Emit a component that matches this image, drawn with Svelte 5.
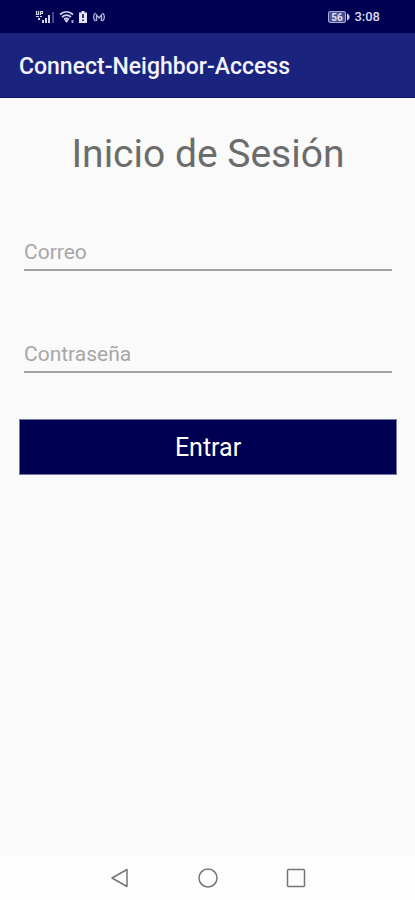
<script>
  let email = $state('');
  let password = $state('');

  function login(event) {
    event.preventDefault();
  }
</script>

<div class="screen">
  <div class="status-bar">
    <div class="status-group">
      <svg width="20" height="14" viewBox="0 0 20 14">
        <path d="M1.500 1v3.500h2V1M5.500 5V1.500h2v2h-2M1 6.500h3M5 6.500h2" stroke="#d4d4ee" stroke-width="1.200" fill="none" />
        <path d="M3 8h2v2H3zM7 10h2v3H7zM10 8h2v5h-2zM13 5h2v8h-2z" fill="#d4d4ee" />
        <path d="M17 2h2v11h-2z" fill="#44448a" />
      </svg>
      <svg width="16" height="14" viewBox="0 0 16 14">
        <path d="M1 4.500c4-3.500 9-3.500 13 0M3 7c3-2.500 6-2.500 9 0M5 9.300c2-1.500 3-1.500 5 0" fill="none" stroke="#d4d4ee" stroke-width="1.700" />
        <path d="M5 9.500h5l-2.500 3.500z" fill="#d4d4ee" />
        <path d="M12.500 10h2v3h-2z" fill="#a5a5d0" />
      </svg>
      <svg width="8" height="14" viewBox="0 0 8 14">
        <path d="M2.500 1h3v1.500H8V13H0V2.500h2.500z" fill="#e4e4f6" />
        <path d="M4 4v4M4 9.500V11" stroke="#000052" stroke-width="1.500" />
      </svg>
      <svg class="cast" width="12" height="14" viewBox="0 0 12 14">
        <path d="M2.500 3C0 5 0 9 2.500 11M9.500 3c2.500 2 2.500 6 0 8M3.500 11V5L6 8l2.500-3v6" fill="none" stroke="#b4b4dc" stroke-width="1.300" />
      </svg>
    </div>
    <div class="status-group">
      <svg width="22" height="12" viewBox="0 0 22 12">
        <rect x="0.500" y="0.500" width="17" height="11" rx="1.500" fill="#4c4c94" stroke="#a9a9d2" />
        <path d="M19.500 3c2 1 2 5 0 6z" fill="#d4d4ee" stroke="#d4d4ee" />
        <text x="9" y="9.500" text-anchor="middle">56</text>
      </svg>
      <span class="time">3:08</span>
    </div>
  </div>

  <header class="app-bar">Connect-Neighbor-Access</header>

  <main>
    <h1>Inicio de Sesión</h1>
    <form onsubmit={login}>
      <input type="email" placeholder="Correo" aria-label="Correo" bind:value={email} />
      <input type="password" placeholder="Contraseña" aria-label="Contraseña" bind:value={password} />
      <button class="submit" type="submit">Entrar</button>
    </form>
  </main>

  <nav>
    <button aria-label="Atrás">
      <svg width="20" height="20" viewBox="0 0 20 20">
        <path d="M17 1.500v17L2 10z" />
      </svg>
    </button>
    <button aria-label="Inicio">
      <svg width="20" height="20" viewBox="0 0 20 20">
        <circle cx="10" cy="10" r="9" />
      </svg>
    </button>
    <button aria-label="Recientes">
      <svg width="20" height="20" viewBox="0 0 20 20">
        <rect x="1.500" y="1.500" width="17" height="17" rx="1" />
      </svg>
    </button>
  </nav>
</div>

<style>
  :global(body) {
    margin: 0;
    background: #fafafa;
  }

  .screen {
    display: flex;
    flex-direction: column;
    min-height: 100vh;
    background: #fafafa;
    font-family: Roboto, "Liberation Sans", sans-serif;
  }

  .status-bar {
    display: flex;
    justify-content: space-between;
    align-items: center;
    box-sizing: border-box;
    height: 33px;
    padding: 0 35px;
    background: #000052;
  }

  .status-group {
    display: flex;
    align-items: center;
    gap: 4px;
  }

  .cast {
    margin-left: 2px;
  }

  .status-group text {
    font-size: 10px;
    font-weight: bold;
    fill: #e4e4f6;
  }

  .time {
    font-size: 13px;
    font-weight: 500;
    color: #dcdcf2;
  }

  .app-bar {
    display: flex;
    align-items: center;
    box-sizing: border-box;
    height: 65px;
    padding: 2px 19px 0;
    border-bottom: 1px solid #10106a;
    background: #1a237e;
    color: #f4f4ff;
    font-size: 23px;
    font-weight: 500;
  }

  main {
    flex: 1;
    padding: 32px 18px 0 19px;
  }

  h1 {
    margin: 0;
    color: #6c6c6c;
    font-size: 39px;
    font-weight: 400;
    line-height: 48px;
    text-align: center;
  }

  form {
    display: flex;
    flex-direction: column;
    margin-top: 51px;
  }

  input {
    box-sizing: border-box;
    height: 42px;
    margin: 0 5px;
    padding: 10px 0 4px;
    border: 0;
    border-bottom: 2px solid #a3a3a3;
    border-radius: 0;
    outline: none;
    background: none;
    color: #333;
    font-family: inherit;
    font-size: 21px;
  }

  input + input {
    margin-top: 60px;
  }

  input::placeholder {
    color: #a6a6a6;
    opacity: 1;
  }

  .submit {
    height: 56px;
    margin-top: 46px;
    padding: 0;
    border: 1px solid #77779f;
    background: #000052;
    color: #fff;
    font-family: inherit;
    font-size: 25px;
  }

  nav {
    display: flex;
    justify-content: center;
    height: 44px;
    background: #fdfdfd;
  }

  nav button {
    display: flex;
    justify-content: center;
    align-items: center;
    width: 88px;
    padding: 0;
    border: 0;
    background: none;
  }

  nav svg {
    fill: none;
    stroke: #757575;
    stroke-width: 1.5;
    stroke-linejoin: round;
  }
</style>
